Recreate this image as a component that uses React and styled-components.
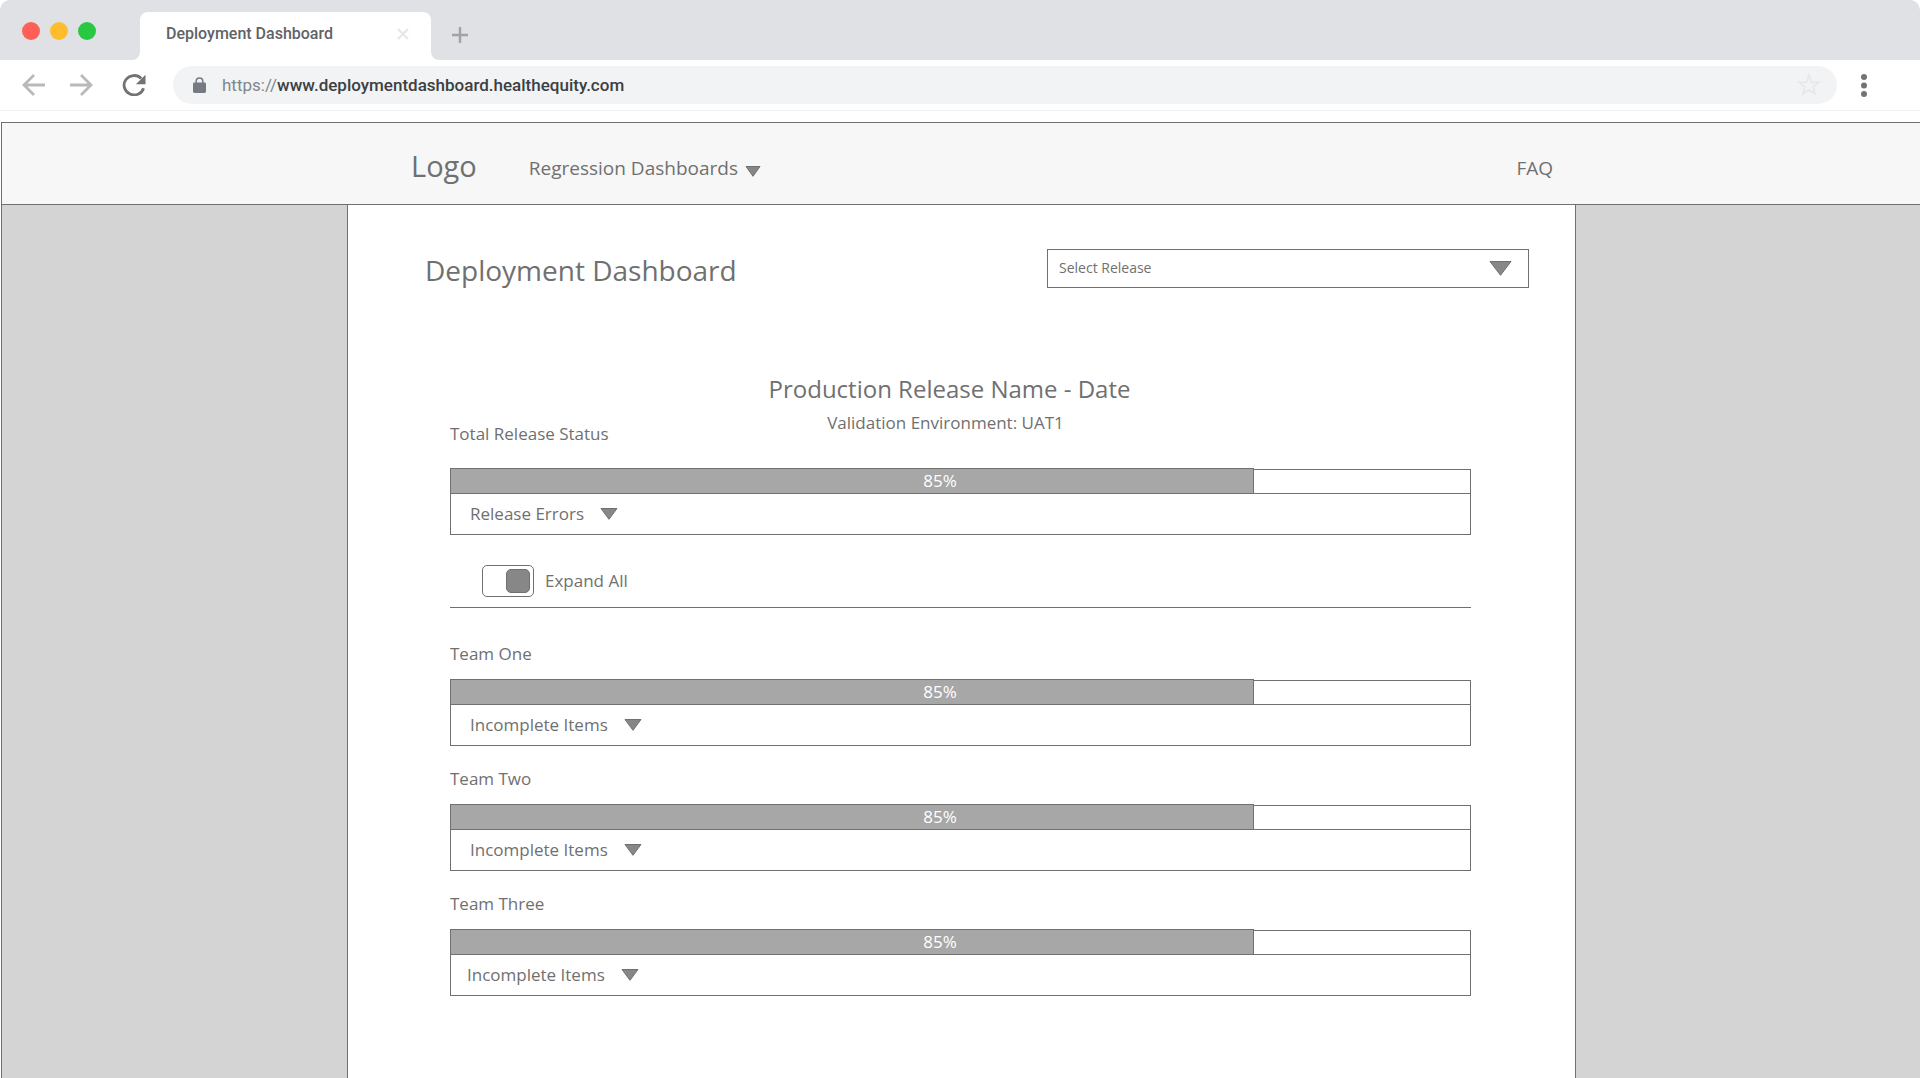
import React, { useState } from "react";
import styled, { createGlobalStyle } from "styled-components";

const line = "#707070";
const ink = "#707070";
const uiFont = `"Open Sans", "Noto Sans", sans-serif`;
const chromeFont = `Roboto, "Open Sans", sans-serif`;

const GlobalStyle = createGlobalStyle`
  *, *::before, *::after { box-sizing: border-box; }
  body { margin: 0; background: #fff; color: ${ink}; font-family: ${uiFont}; }
  h1, h2, h3, p { margin: 0; font-weight: 400; }
  button, input, select { font: inherit; color: inherit; }
  button { padding: 0; border: 0; background: none; cursor: pointer; }
  svg { display: block; flex: none; }
`;

const Page = styled.div`
  display: flex;
  flex-direction: column;
  min-height: 100vh;
`;

/* Browser window */
const TabStrip = styled.div`
  display: flex;
  height: 60px;
  font-family: ${chromeFont};
`;

const WindowControls = styled.div`
  display: flex;
  align-items: center;
  gap: 10px;
  width: 140px;
  padding: 2px 0 0 22px;
  background: #dfe1e5;
  border-radius: 10px 0 8px 0;
`;

const WindowDot = styled.button`
  width: 18px;
  height: 18px;
  border-radius: 50%;
  background: ${(p) => p.$color};
`;

const TabSlot = styled.div`
  width: 291px;
  padding-top: 12px;
  background: #dfe1e5;
`;

const Tab = styled.div`
  display: flex;
  align-items: center;
  justify-content: space-between;
  height: 48px;
  padding: 0 22px 4px 26px;
  background: #fff;
  border-radius: 8px 8px 0 0;
`;

const TabTitle = styled.button`
  font-size: 16px;
  font-weight: 500;
  line-height: 24px;
  color: #5f6368;
`;

const StripRest = styled.div`
  flex: 1;
  display: flex;
  align-items: center;
  padding: 10px 0 0 21px;
  background: #dfe1e5;
  border-radius: 0 10px 0 8px;
`;

const Toolbar = styled.div`
  display: flex;
  align-items: center;
  height: 51px;
  padding: 0 53px 0 22px;
  border-bottom: 1px solid #f1f3f4;
  font-family: ${chromeFont};
`;

const NavButtons = styled.div`
  display: flex;
  gap: 25px;
  width: 151px;
`;

const AddressBar = styled.div`
  flex: 1;
  display: flex;
  align-items: center;
  height: 38px;
  margin-right: 24px;
  padding: 0 16px 0 20px;
  background: #f1f3f4;
  border-radius: 19px;
  font-size: 17px;
  line-height: 24px;
`;

const Scheme = styled.label`
  margin-left: 16px;
  color: #80868b;
`;

const UrlInput = styled.input`
  flex: 1;
  min-width: 0;
  padding: 0;
  border: 0;
  outline: 0;
  background: none;
  font-weight: 500;
  color: #3c4043;
`;

/* Site */
const SiteHeader = styled.header`
  display: flex;
  justify-content: center;
  height: 83px;
  margin: 11px 0 0 1px;
  padding-left: 1px;
  background: #f7f7f7;
  border: solid ${line};
  border-width: 1px 0 1px 1px;
`;

const HeaderInner = styled.div`
  flex: 0 1 1229px;
  display: flex;
  align-items: center;
  padding: 5px 23px 0 64px;
`;

const Logo = styled.a`
  margin-right: 52px;
  color: inherit;
  text-decoration: none;
  font-size: 29px;
  line-height: 38px;
`;

const MenuButton = styled.button`
  display: flex;
  align-items: flex-end;
  gap: 7px;
  padding-top: 4px;
  font-size: 19px;
  line-height: 26px;
  svg { margin-bottom: 4px; }
`;

const NavLink = styled.a`
  margin-left: auto;
  padding-top: 4px;
  color: inherit;
  text-decoration: none;
  font-size: 19px;
  line-height: 26px;
`;

const Workspace = styled.div`
  flex: 1;
  display: flex;
  justify-content: center;
  margin-left: 1px;
  padding-left: 1px;
  background: #d4d4d4;
  border-left: 1px solid ${line};
`;

const Main = styled.main`
  flex: 0 1 1229px;
  min-width: 0;
  padding-top: 44px;
  background: #fff;
  border: solid ${line};
  border-width: 0 1px;
`;

const TitleRow = styled.div`
  display: flex;
  justify-content: space-between;
  height: 39px;
  padding: 0 46px 0 77px;
`;

const PageTitle = styled.h1`
  font-size: 28px;
  line-height: 42px;
`;

const SelectBox = styled.div`
  position: relative;
  flex: 0 1 482px;
  height: 39px;
  svg {
    position: absolute;
    top: 12px;
    right: 17px;
    pointer-events: none;
  }
`;

const ReleaseSelect = styled.select`
  width: 100%;
  height: 39px;
  padding: 0 44px 2px 11px;
  appearance: none;
  border: 1px solid ${line};
  border-radius: 0;
  background: #fff;
  font-size: 14px;
`;

const Content = styled.div`
  padding: 85px 104px 40px 102px;
`;

const ReleaseSummary = styled.div`
  display: grid;
  grid-template-columns: 1fr auto 1fr;
  height: 73px;
  margin-bottom: 22px;
  padding-right: 22px;
`;

const ReleaseHeading = styled.div`
  display: flex;
  flex-direction: column;
  align-items: center;
  gap: 6px;
`;

const ReleaseName = styled.h2`
  font-size: 24px;
  line-height: 32px;
`;

const Environment = styled.p`
  padding-right: 8px;
  font-size: 17px;
  line-height: 24px;
`;

const SectionLabel = styled.h3`
  align-self: end;
  font-size: 17px;
  line-height: 24px;
`;

const Progress = styled.div`
  position: relative;
  display: flex;
  align-items: flex-end;
  height: 26px;
`;

const ProgressFill = styled.div`
  height: 26px;
  background: #a7a7a7;
  border: 1px solid ${line};
`;

const ProgressRest = styled.div`
  flex: 1;
  height: 25px;
  border: solid ${line};
  border-width: 1px 1px 1px 0;
`;

const ProgressValue = styled.span`
  position: absolute;
  inset: 0 41px 0 0;
  text-align: center;
  font-size: 17px;
  line-height: 26px;
  color: #fff;
`;

const DetailsButton = styled.button`
  display: flex;
  align-items: center;
  gap: 16px;
  width: 100%;
  height: 41px;
  padding-left: ${(p) => p.$inset}px;
  border: solid ${line};
  border-width: 0 1px 1px;
  font-size: 17px;
  line-height: 24px;
`;

const ExpandRow = styled.div`
  display: flex;
  align-items: center;
  gap: 11px;
  margin: 30px 0 34px;
  padding: 0 0 10px 32px;
  border-bottom: 1px solid ${line};
  font-size: 17px;
  line-height: 24px;
`;

const Toggle = styled.input`
  display: flex;
  align-items: center;
  justify-content: ${(p) => (p.checked ? "flex-end" : "flex-start")};
  width: 52px;
  height: 32px;
  margin: 0;
  padding: 0 3px;
  appearance: none;
  border: 1px solid ${line};
  border-radius: 5px;
  background: #fff;
  cursor: pointer;
  &::after {
    content: "";
    width: 24px;
    height: 24px;
    border: 1px solid ${line};
    border-radius: 5px;
    background: #878787;
  }
`;

const TeamList = styled.div`
  display: flex;
  flex-direction: column;
  gap: 21px;
`;

const TeamCard = styled.section`
  ${SectionLabel} { margin-bottom: 13px; }
`;

function Triangle({ width, height }) {
  return (
    <svg width={width} height={height} viewBox={`0 0 ${width} ${height}`} aria-hidden="true">
      <path
        d={`M1 .5H${width - 1}L${width / 2} ${height - 0.7}Z`}
        fill="#878787"
        stroke={line}
      />
    </svg>
  );
}

function StatusBar({ percent, share, details, inset = 19 }) {
  return (
    <>
      <Progress role="progressbar" aria-valuenow={percent}>
        <ProgressFill style={{ width: `${share}%` }} />
        <ProgressRest />
        <ProgressValue>{percent}%</ProgressValue>
      </Progress>
      <DetailsButton type="button" $inset={inset}>
        {details}
        <Triangle width={18} height={12} />
      </DetailsButton>
    </>
  );
}

const teams = [
  { name: "Team One", percent: 85, share: 78.7 },
  { name: "Team Two", percent: 85, share: 78.7 },
  { name: "Team Three", percent: 85, share: 78.7, inset: 16 },
];

export default function App() {
  const [expanded, setExpanded] = useState(true);
  const [url, setUrl] = useState("www.deploymentdashboard.healthequity.com");

  return (
    <Page>
      <GlobalStyle />
      <TabStrip>
        <WindowControls>
          <WindowDot type="button" aria-label="Close window" $color="#ff5f57" />
          <WindowDot type="button" aria-label="Minimize window" $color="#ffbd2e" />
          <WindowDot type="button" aria-label="Maximize window" $color="#28c840" />
        </WindowControls>
        <TabSlot>
          <Tab>
            <TabTitle type="button">Deployment Dashboard</TabTitle>
            <button type="button" aria-label="Close tab">
              <svg width="12" height="12" viewBox="0 0 12 12">
                <path d="M1 1l10 10M11 1L1 11" stroke="#e6e8eb" strokeWidth="2.4" />
              </svg>
            </button>
          </Tab>
        </TabSlot>
        <StripRest>
          <button type="button" aria-label="New tab">
            <svg width="16" height="16" viewBox="0 0 16 16">
              <path d="M8 0v16M0 8h16" stroke="#9fa3a7" strokeWidth="2.4" />
            </svg>
          </button>
        </StripRest>
      </TabStrip>

      <Toolbar>
        <NavButtons>
          <button type="button" aria-label="Back">
            <svg width="23" height="22" viewBox="0 0 23 22" fill="none" stroke="#b9b9b9" strokeWidth="2.8">
              <path d="M12 1L2 11l10 10M2 11h21" />
            </svg>
          </button>
          <button type="button" aria-label="Forward">
            <svg width="23" height="22" viewBox="0 0 23 22" fill="none" stroke="#b9b9b9" strokeWidth="2.8">
              <path d="M11 1l10 10-10 10M21 11H0" />
            </svg>
          </button>
          <button type="button" aria-label="Reload">
            <svg width="28" height="22" viewBox="-5 0 28 22">
              <path d="M20.6 14.2A10 9.7 0 1 1 18.2 4.4" fill="none" stroke="#737373" strokeWidth="2.8" />
              <path d="M22.5 .8v9.4h-9.6z" fill="#737373" />
            </svg>
          </button>
        </NavButtons>
        <AddressBar>
          <svg width="13" height="16" viewBox="0 0 13 16" aria-hidden="true">
            <path d="M3.2 6V4.2a3.3 3.3 0 0 1 6.6 0V6" fill="none" stroke="#757b80" strokeWidth="1.5" />
            <rect y="5.5" width="13" height="10.5" rx="1.4" fill="#757b80" />
          </svg>
          <Scheme htmlFor="address">https://</Scheme>
          <UrlInput id="address" value={url} onChange={(e) => setUrl(e.target.value)} />
          <button type="button" aria-label="Bookmark this page">
            <svg width="24" height="24" viewBox="0 0 24 24">
              <path
                d="M12 2.2l2.5 6.9 7.3.3-5.7 4.5 2 7.1-6.1-4.1-6.1 4.1 2-7.1-5.7-4.5 7.3-.3z"
                fill="none"
                stroke="#e6e8ea"
                strokeWidth="1.8"
              />
            </svg>
          </button>
        </AddressBar>
        <button type="button" aria-label="Menu">
          <svg width="6" height="23" viewBox="0 0 6 23" fill="#737373">
            <circle cx="3" cy="3" r="3" />
            <circle cx="3" cy="11.5" r="3" />
            <circle cx="3" cy="20" r="3" />
          </svg>
        </button>
      </Toolbar>

      <SiteHeader>
        <HeaderInner>
          <Logo href="#home">Logo</Logo>
          <MenuButton type="button">
            Regression Dashboards
            <Triangle width={16} height={11} />
          </MenuButton>
          <NavLink href="#faq">FAQ</NavLink>
        </HeaderInner>
      </SiteHeader>

      <Workspace>
        <Main>
          <TitleRow>
            <PageTitle>Deployment Dashboard</PageTitle>
            <SelectBox>
              <ReleaseSelect aria-label="Select Release" defaultValue="">
                <option value="">Select Release</option>
              </ReleaseSelect>
              <Triangle width={23} height={15} />
            </SelectBox>
          </TitleRow>

          <Content>
            <ReleaseSummary>
              <SectionLabel>Total Release Status</SectionLabel>
              <ReleaseHeading>
                <ReleaseName>Production Release Name - Date</ReleaseName>
                <Environment>Validation Environment: UAT1</Environment>
              </ReleaseHeading>
            </ReleaseSummary>
            <StatusBar percent={85} share={78.7} details="Release Errors" />

            <ExpandRow>
              <Toggle
                id="expand-all"
                type="checkbox"
                checked={expanded}
                onChange={(e) => setExpanded(e.target.checked)}
              />
              <label htmlFor="expand-all">Expand All</label>
            </ExpandRow>

            <TeamList>
              {teams.map((team) => (
                <TeamCard key={team.name}>
                  <SectionLabel>{team.name}</SectionLabel>
                  <StatusBar
                    percent={team.percent}
                    share={team.share}
                    inset={team.inset}
                    details="Incomplete Items"
                  />
                </TeamCard>
              ))}
            </TeamList>
          </Content>
        </Main>
      </Workspace>
    </Page>
  );
}
